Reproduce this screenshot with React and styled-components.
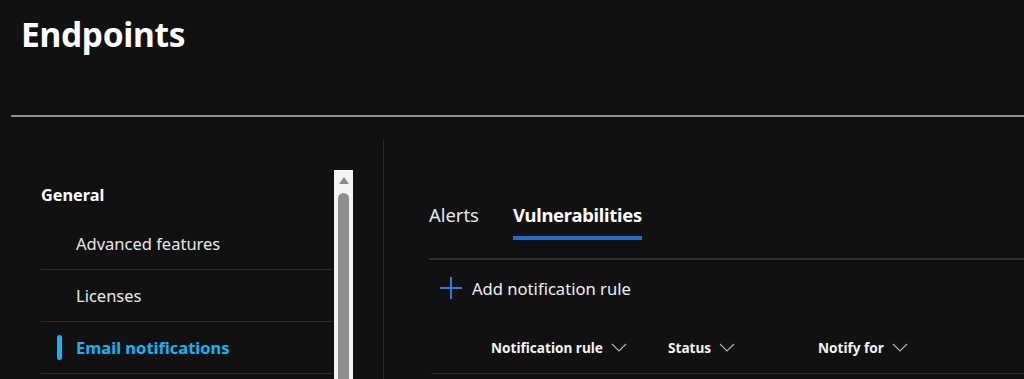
import React from "react";
import styled, { createGlobalStyle } from "styled-components";

const GlobalStyle = createGlobalStyle`
  html, body {
    margin: 0;
    padding: 0;
    background: #111111;
  }
  body {
    font-family: "Noto Sans", "Open Sans", sans-serif;
    color: #ffffff;
  }
`;

const navItems = [
  { label: "Advanced features" },
  { label: "Licenses" },
  { label: "Email notifications", active: true },
];

const columns = [
  { label: "Notification rule", left: 60 },
  { label: "Status", left: 237 },
  { label: "Notify for", left: 387 },
];

const Chevron = () => (
  <svg width="16" height="9" viewBox="0 0 16 9" fill="none">
    <path d="M1 1 L8 8 L15 1" stroke="#b5b5b5" strokeWidth="1.1" />
  </svg>
);

const PlusIcon = () => (
  <svg width="22" height="22" viewBox="0 0 22 22">
    <path d="M11 0 V22 M0 11 H22" stroke="#2b7fe0" strokeWidth="2" />
  </svg>
);

class App extends React.Component {
  render() {
    return (
      <Page>
        <GlobalStyle />
        <Header>
          <Title>Endpoints</Title>
        </Header>
        <Rule />
        <Body>
          <Sidebar>
            <Nav>
              <NavHeading>General</NavHeading>
              {navItems.map((item, i) => (
                <NavItem key={i} active={item.active}>
                  {item.active && <Indicator />}
                  {item.label}
                </NavItem>
              ))}
            </Nav>
            <Scrollbar>
              <ScrollArrow />
              <ScrollThumb />
            </Scrollbar>
          </Sidebar>
          <Main>
            <Tabs>
              <Tab>Alerts</Tab>
              <Tab selected>Vulnerabilities</Tab>
            </Tabs>
            <AddRule>
              <PlusIcon />
              <span>Add notification rule</span>
            </AddRule>
            <HeaderRow>
              {columns.map((col, i) => (
                <Column key={i} style={{ left: col.left }}>
                  {col.label}
                  <Chevron />
                </Column>
              ))}
            </HeaderRow>
          </Main>
        </Body>
      </Page>
    );
  }
}

const Page = styled.div`
  width: 1024px;
  height: 379px;
  overflow: hidden;
  background: #111111;
`;

const Header = styled.header`
  height: 115px;
  padding-left: 21px;
  box-sizing: border-box;
`;

const Title = styled.h1`
  margin: 0;
  padding-top: 11px;
  font-size: 33.5px;
  line-height: 46px;
  font-weight: 700;
  color: #ffffff;
  letter-spacing: -0.3px;
`;

const Rule = styled.div`
  margin-left: 11px;
  height: 2px;
  background: #8f8f8f;
`;

const Body = styled.div`
  display: grid;
  grid-template-columns: 384px 1fr;
  height: 262px;
`;

const Sidebar = styled.aside`
  display: flex;
  margin-top: 23px;
  padding-left: 41px;
  border-right: 1px solid #2c2c2c;
`;

const Nav = styled.nav`
  width: 292px;
  display: flex;
  flex-direction: column;
`;

const NavHeading = styled.div`
  margin-top: 43px;
  height: 35px;
  line-height: 24px;
  font-size: 16.3px;
  font-weight: 700;
  color: #ffffff;
`;

const NavItem = styled.div`
  position: relative;
  height: 52px;
  display: flex;
  align-items: center;
  padding-left: 35px;
  font-size: 16.5px;
  font-weight: ${(p) => (p.active ? 700 : 400)};
  color: ${(p) => (p.active ? "#14b4f0" : "#e8e8e8")};
  border-bottom: 1px solid #2e2e2e;
  box-sizing: border-box;
`;

const Indicator = styled.span`
  position: absolute;
  left: 16px;
  top: 13px;
  width: 5px;
  height: 25px;
  border-radius: 3px;
  background: #14b4f0;
`;

const Scrollbar = styled.div`
  margin-top: 30px;
  margin-left: 1px;
  width: 19px;
  background: #f4f4f4;
  display: flex;
  flex-direction: column;
  align-items: center;
`;

const ScrollArrow = styled.div`
  margin-top: 7px;
  width: 0;
  height: 0;
  border-left: 5px solid transparent;
  border-right: 5px solid transparent;
  border-bottom: 7px solid #8a8a8a;
`;

const ScrollThumb = styled.div`
  margin-top: 9px;
  width: 11px;
  flex: 1;
  border-radius: 6px 6px 0 0;
  background: #8e8e8e;
`;

const Main = styled.main`
  padding-left: 47px;
  display: flex;
  flex-direction: column;
`;

const Tabs = styled.div`
  margin-top: 79px;
  margin-left: -2px;
  padding-bottom: 18px;
  display: flex;
  gap: 34px;
  border-bottom: 2px solid #2e2e2e;
`;

const Tab = styled.div`
  height: 44px;
  padding-bottom: 4px;
  box-sizing: border-box;
  display: flex;
  align-items: center;
  font-size: 18.4px;
  font-weight: ${(p) => (p.selected ? 700 : 400)};
  letter-spacing: ${(p) => (p.selected ? "-0.25px" : "0")};
  color: ${(p) => (p.selected ? "#ffffff" : "#e8e8e8")};
  border-bottom: 4px solid ${(p) => (p.selected ? "#1672d6" : "transparent")};
`;

const AddRule = styled.div`
  height: 56px;
  display: flex;
  align-items: center;
  gap: 10px;
  padding-left: 9px;
  font-size: 16.6px;
  color: #f0f0f0;
`;

const HeaderRow = styled.div`
  position: relative;
  height: 57px;
  border-bottom: 1px solid #2e2e2e;
`;

const Column = styled.div`
  position: absolute;
  top: 5px;
  height: 52px;
  display: flex;
  align-items: center;
  gap: 8px;
  font-size: 13.6px;
  font-weight: 700;
  color: #f4f4f4;
`;

export default App;
